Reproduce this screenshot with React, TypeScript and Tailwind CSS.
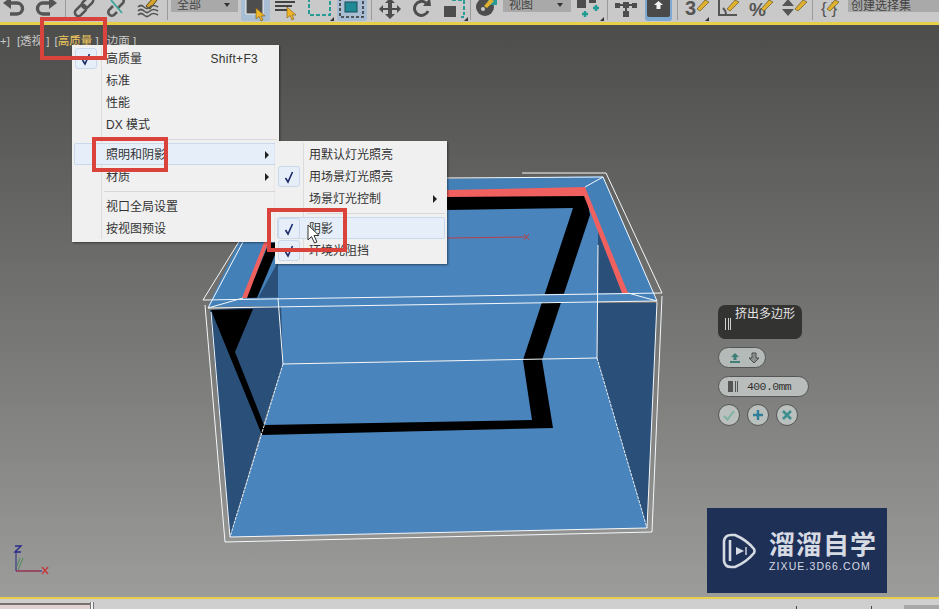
import type { ReactNode } from "react";

const cjk = { fontFamily: '"Liberation Sans", "Noto Sans CJK SC", sans-serif' };

function Sep({ className }: { className: string }) {
  return <div className={`h-[20px] w-px shrink-0 bg-[#9a9a9a] ${className}`} />;
}

function Ico({ w, className, children }: { w: number; className: string; children: ReactNode }) {
  return (
    <svg width={w} height={22} viewBox={`0 0 ${w} 22`} className={`shrink-0 ${className}`}>
      {children}
    </svg>
  );
}

function Flyout({ x }: { x: number }) {
  return <path d={`M${x - 4} 21 L${x} 17 V21 Z`} fill="#333" />;
}

function Cursor() {
  return <path d="M15 8 L15 19 L18 16.5 L20 21 L22 20 L20 16 L24 16 Z" fill="#f0b429" stroke="#7a5a10" strokeWidth="0.6" />;
}

function Pencil({ x }: { x: number }) {
  return <path d={`M${x} 9 L${x + 8} 0 L${x + 12} 2 L${x + 3} 11 Z`} fill="#e0b030" stroke="#6b5a20" strokeWidth="0.7" />;
}

function Toolbar() {
  return (
    <div className="flex h-[22px] shrink-0 items-start overflow-hidden bg-[#c9c9c9]" style={cjk}>
      <Ico w={22} className="ml-[3px]">
        <path d="M6 3 H14 a5.5 5.5 0 0 1 0 11 H7" fill="none" stroke="#555" strokeWidth="3.4" />
        <path d="M0 3 L8 -3 V9 Z" fill="#555" />
      </Ico>
      <Ico w={22} className="ml-[10px]">
        <path d="M16 3 H8 a5.5 5.5 0 0 0 0 11 H15" fill="none" stroke="#555" strokeWidth="3.4" />
        <path d="M22 3 L14 -3 V9 Z" fill="#555" />
      </Ico>
      <Sep className="ml-[8px]" />
      <Ico w={22} className="ml-[7px]">
        <g fill="none" stroke="#555" strokeWidth="2.6">
          <rect x="1" y="7" width="13" height="7" rx="3.5" transform="rotate(-45 7.5 10.5)" />
          <rect x="8" y="-1" width="13" height="7" rx="3.5" transform="rotate(-45 14.5 2.5)" />
        </g>
      </Ico>
      <Ico w={21} className="ml-[11px]">
        <g fill="none" strokeWidth="2.6">
          <path d="M7 6 L3 10 a3.6 3.6 0 0 0 5 5 L11 12" stroke="#555" />
          <path d="M12 8 L17 3 a3.6 3.6 0 0 0 -5 -5" stroke="#555" />
          <path d="M5 0 L16 13" stroke="#3aa59c" strokeWidth="1.8" />
        </g>
      </Ico>
      <Ico w={23} className="ml-[10px]">
        <path d="M9 6 L17 -3 L20 0 L13 9 Z" fill="#d9a52c" stroke="#55401a" strokeWidth="1" />
        <g fill="none" stroke="#555" strokeWidth="1.7">
          <path d="M1 7 q3 -3 6 0 t6 0 t8 0" />
          <path d="M1 11 q3 -3 6 0 t6 0 t8 0" />
          <path d="M1 15 q3 -3 6 0 t6 0 t8 0" />
        </g>
      </Ico>
      <Sep className="ml-[7px]" />
      <div className="ml-[3px] flex h-[12px] w-[67px] shrink-0 items-end justify-between bg-[#a9a9a9] pl-[6px] pr-[8px] text-[12px] leading-[14px] text-[#444]">
        <span>全部</span>
        <span className="mb-[5px] h-0 w-0 border-x-[3px] border-t-[4px] border-x-transparent border-t-[#333]" />
      </div>
      <div className="ml-[3px] h-[21px] w-[29px] shrink-0 rounded-b-[2px] bg-[#a9bdd3]">
        <Ico w={29} className="">
          <path d="M5 -2 H22 V14 H5 Z" fill="#4d4d4d" stroke="#f2f2f2" strokeWidth="1" />
          <Cursor />
        </Ico>
      </div>
      <Ico w={23} className="ml-[5px]">
        <path d="M0 2 H20 M0 6 H17 M0 10 H14" stroke="#444" strokeWidth="2" />
        <g transform="translate(-3 -1)">
          <Cursor />
        </g>
      </Ico>
      <Ico w={26} className="ml-[10px]">
        <path d="M1 -2 V15 H22 V-2" fill="none" stroke="#2a9a94" strokeWidth="2" strokeDasharray="4 2" />
        <Flyout x={26} />
      </Ico>
      <div className="ml-[3px] h-[21px] w-[30px] shrink-0 rounded-b-[2px] bg-[#a9bdd3]">
        <Ico w={30} className="">
          <path d="M3 -2 V17 H26 V-2" fill="none" stroke="#333" strokeWidth="1.6" strokeDasharray="3 2" />
          <rect x="8" y="2" width="12" height="10" fill="#1e8a96" stroke="#174f58" strokeWidth="1" />
        </Ico>
      </div>
      <Sep className="ml-[4px]" />
      <Ico w={22} className="ml-[7px]">
        <path d="M11 -2 L16 3 H13 V8 H18 V5 L22 9 L18 13 V10 H13 V14 H16 L11 19 L6 14 H9 V10 H4 V13 L0 9 L4 5 V8 H9 V3 H6 Z" fill="#4d4d4d" />
      </Ico>
      <Ico w={20} className="ml-[11px]">
        <path d="M14 3 a7 7 0 1 0 2 8" fill="none" stroke="#4d4d4d" strokeWidth="3" />
        <path d="M11 6 L19 6 L18 -2 Z" fill="#4d4d4d" />
      </Ico>
      <Ico w={25} className="ml-[11px]">
        <rect x="1" y="6" width="12" height="11" fill="#4d4d4d" />
        <path d="M9 0 H21 V12" fill="none" stroke="#2a9a94" strokeWidth="2" strokeDasharray="4 2" />
        <path d="M21 12 V17 H16" fill="none" stroke="#2a9a94" strokeWidth="2" strokeDasharray="3 2" />
        <Flyout x={25} />
      </Ico>
      <Sep className="ml-[2px]" />
      <Ico w={22} className="ml-[4px]">
        <circle cx="10" cy="7" r="9" fill="#4d4d4d" />
        <circle cx="8" cy="9" r="2" fill="#c9c9c9" />
        <path d="M13 -2 H22 V5 H13 Z" fill="#2a9a94" />
        <path d="M9 6 L15 -1 L19 1 L12 8 Z" fill="#e0b030" />
      </Ico>
      <div className="ml-[6px] flex h-[12px] w-[68px] shrink-0 items-end justify-between bg-[#a9a9a9] pl-[6px] pr-[8px] text-[12px] leading-[14px] text-[#444]">
        <span>视图</span>
        <span className="mb-[5px] h-0 w-0 border-x-[3px] border-t-[4px] border-x-transparent border-t-[#333]" />
      </div>
      <Ico w={27} className="ml-[6px]">
        <rect x="0" y="-2" width="9" height="10" fill="#4d4d4d" />
        <rect x="12" y="-2" width="7" height="5" fill="#4d4d4d" />
        <path d="M5 14 H11 M8 11 V17 M16 8 H22 M19 5 V11" stroke="#1f9c94" strokeWidth="2.4" />
        <Flyout x={27} />
      </Ico>
      <Sep className="ml-[3px]" />
      <Ico w={22} className="ml-[7px]">
        <path d="M11 3 V12 M2 5 H20" stroke="#4d4d4d" strokeWidth="2" />
        <rect x="0" y="3" width="5" height="5" fill="#4d4d4d" />
        <rect x="8" y="2" width="6" height="6" fill="#4d4d4d" />
        <rect x="17" y="3" width="5" height="5" fill="#4d4d4d" />
        <rect x="8" y="11" width="6" height="6" fill="#4d4d4d" />
      </Ico>
      <div className="ml-[8px] h-[21px] w-[27px] shrink-0 rounded-b-[3px] bg-[#7ea9d3]">
        <Ico w={27} className="">
          <rect x="2" y="-3" width="23" height="20" rx="2" fill="#4a4a4a" />
          <path d="M13.5 1 L18 5 H15.5 V9 H11.5 V5 H9 Z" fill="#f2f2f2" />
        </Ico>
      </div>
      <Sep className="ml-[5px]" />
      <Ico w={24} className="ml-[7px]">
        <text x="0" y="15" fontSize="20" fontWeight="700" fill="#555" fontFamily="Liberation Sans">3</text>
        <Pencil x={12} />
        <Flyout x={24} />
      </Ico>
      <Ico w={22} className="ml-[8px]">
        <path d="M2 0 V15 H20 M9 15 a9 9 0 0 0 -3 -7" fill="none" stroke="#555" strokeWidth="2" />
        <Pencil x={10} />
      </Ico>
      <Ico w={24} className="ml-[10px]">
        <text x="0" y="16" fontSize="19" fontWeight="700" fill="#555" fontFamily="Liberation Sans">%</text>
        <Pencil x={12} />
      </Ico>
      <Ico w={25} className="ml-[9px]">
        <path d="M0 6 L6 -1 L12 6 Z M0 9 H12 L6 16 Z" fill="#555" />
        <Pencil x={13} />
      </Ico>
      <Sep className="ml-[5px]" />
      <Ico w={18} className="ml-[8px]">
        <text x="0" y="14" fontSize="17" fill="#555" fontFamily="Liberation Sans">{"{ }"}</text>
        <Pencil x={6} />
      </Ico>
      <div className="ml-[9px] h-[12px] flex-1 bg-[#a9a9a9] pl-[3px] text-[12px] leading-[12px] text-[#444]">
        创建选择集
      </div>
    </div>
  );
}

function Scene() {
  const lines = [
    "203,300 662,293", "208,308 657,301",
    "203,300 240,240", "208,308 244,240",
    "606,173 662,293", "603,177 657,301",
    "447,178 603,177", "522,173 606,173",
    "205,305 225,542", "211,312 230,537",
    "657,302 647,528", "662,296 652,532",
    "230,537 647,528", "225,542 652,532",
    "283,364 597,358", "278,298 283,364", "598,245 597,358",
    "208,308 243,298", "657,301 628,293", "585,187 603,177",
  ];
  return (
    <svg className="absolute inset-0 h-full w-full" viewBox="0 25 939 572" preserveAspectRatio="none">
      <polygon points="208,306 657,300 603,176 268,182" fill="#4480b8" />
      <polygon points="270,205 585,195 598,222 598,305 278,306 278,260" fill="#4a84bc" />
      <polygon points="258,298 278,262 278,298" fill="#2a4f78" />
      <polygon points="598,222 622,293 598,295" fill="#2a4f78" />
      <polygon points="278,306 598,303 597,358 283,363" fill="#4a84bc" />
      <polygon points="210,310 281,305 283,363 263,425 230,537" fill="#2a4f78" />
      <polygon points="598,303 657,303 647,528 597,358" fill="#2a4f78" />
      <polygon points="283,363 597,358 647,528 230,537" fill="#4a84bc" />
      <polygon points="211,310 253,309 235,352 264,425 532,420 523,360 573,208 447,210 447,195 586,193 590,215 542,360 553,428 262,435" fill="#000" />
      <polygon points="246,298 269,243 280,243 257,298" fill="#000" />
      <polygon points="242,298 267,235 271,235 247,298" fill="#f0605f" />
      <polygon points="447,190 585,187 587,196 447,197" fill="#f0605f" />
      <polygon points="585,187 628,293 622,293 584,196" fill="#f0605f" />
      <polygon points="208,307 243,298 628,293 657,301" fill="#4a84bc" />
      {lines.map((p) => (
        <polyline key={p} points={p} fill="none" stroke="#f4f8fb" strokeWidth="1" />
      ))}
      <path d="M283 364 L230 537 M597 358 L647 528" stroke="#e8f0f6" strokeWidth="1" strokeDasharray="3 1" />
      <path d="M447 238 L525 237" stroke="#b8404a" strokeWidth="1" />
      <path d="M524 234 L529 240 M529 234 L524 240" stroke="#b8404a" strokeWidth="1" />
      <path d="M16 550 V571 H42" fill="none" stroke="#2a2a8a" strokeWidth="1" />
      <path d="M16 571 H40" stroke="#c8393c" strokeWidth="1" />
      <path d="M17 566 L20 558 M23 558 L18 570" stroke="#4c8a5a" strokeWidth="1" />
      <path d="M15 546 H21 L15 552 H21" fill="none" stroke="#2a2a8a" strokeWidth="1.4" />
      <path d="M42 567 L48 574 M48 567 L42 574" stroke="#c8393c" strokeWidth="1.4" />
    </svg>
  );
}

function Check() {
  return (
    <svg width="12" height="14" viewBox="0 0 12 14">
      <path d="M2.5 8 L5 12 L9.5 2" fill="none" stroke="#1d2a6b" strokeWidth="1.6" />
    </svg>
  );
}

type Row = { label?: string; hint?: string; check?: boolean; arrow?: boolean; hot?: boolean; sep?: boolean };

function Menu({ rows, gutter, className }: { rows: Row[]; gutter: string; className: string }) {
  return (
    <div className={`absolute bg-[#f0f0f0] px-[2px] pb-[3px] pt-[2px] text-[12px] text-[#333] shadow-[1px_1px_2px_rgba(0,0,0,0.45)] ${className}`} style={cjk}>
      <div className={`absolute bottom-[3px] top-[2px] w-px bg-[#dcdcdc] ${gutter}`} />
      {rows.map((r, i) =>
        r.sep ? (
          <div key={i} className="flex h-[8px] items-center pl-[30px]">
            <div className="h-px w-full bg-[#d8d8d8]" />
          </div>
        ) : (
          <div
            key={i}
            className={`relative flex h-[22px] items-center rounded-[2px] border pl-[31px] pr-[7px] pt-[2px] ${
              r.hot ? "border-[#c9d8ea] bg-[#e6eff9]" : "border-transparent"
            }`}
          >
            {r.check && (
              <span className="absolute left-0 top-0 flex h-[21px] w-[22px] items-center justify-center rounded-[3px] border border-[#c9d8ea] bg-[#e6eff9]">
                <Check />
              </span>
            )}
            <span>{r.label}</span>
            {r.hint && <span className="ml-auto mr-[11px] tracking-[0.3px]">{r.hint}</span>}
            {r.arrow && (
              <span className="ml-auto h-0 w-0 border-y-[4px] border-l-[4px] border-y-transparent border-l-[#222]" />
            )}
          </div>
        ),
      )}
    </div>
  );
}

function Caddy() {
  const circle = "flex h-[22px] w-[22px] items-center justify-center rounded-full border border-[#555] bg-[#b9c0bd]";
  return (
    <div className="absolute left-[718px] top-[280px] flex w-[91px] flex-col items-start" style={cjk}>
      <div className="relative h-[34px] w-[84px] rounded-[7px] bg-[#333331] pl-[17px] pt-px text-[12px] leading-[16px] text-[#e4e4e4]">
        挤出多边形
        <span className="absolute left-[7px] top-[13px] h-[12px] w-[6px] border-x border-[#cfcfcf] after:absolute after:left-[1.5px] after:h-[12px] after:w-px after:bg-[#cfcfcf]" />
      </div>
      <div className="mt-[8px] flex h-[21px] w-[48px] items-center gap-[7px] rounded-full border border-[#555] bg-[#b4bab8] pl-[10px]">
        <svg width="12" height="12" viewBox="0 0 12 12">
          <path d="M6 1 L10 5 H7.5 V8 H4.5 V5 H2 Z M1 9 H11 V11 H1 Z" fill="#3f7f78" />
        </svg>
        <svg width="12" height="12" viewBox="0 0 12 12">
          <path d="M6 11 L11 6 H8 V1 H4 V6 H1 Z" fill="#8a8f8d" stroke="#4a4f4d" strokeWidth="1" />
        </svg>
      </div>
      <div className="mt-[8px] flex h-[21px] w-[91px] items-center rounded-full border border-[#555] bg-[#b9bebc] pl-[9px] text-[11.5px] text-[#333]">
        <span className="h-[11px] w-[5px] bg-[#555]" />
        <span className="ml-[2px] h-[11px] w-[3px] border-x border-[#555]" />
        <span className="ml-[9px] font-['Liberation_Mono'] tracking-[-0.6px]">400.0mm</span>
      </div>
      <div className="mt-[7px] flex gap-[7px]">
        <div className={circle}>
          <svg width="12" height="12" viewBox="0 0 12 12">
            <path d="M1 7 L4.5 10.5 L11 2" fill="none" stroke="#7fb0a4" strokeWidth="2" />
          </svg>
        </div>
        <div className={circle}>
          <svg width="12" height="12" viewBox="0 0 12 12">
            <path d="M6 1 V11 M1 6 H11" stroke="#2f7f98" strokeWidth="2.4" />
          </svg>
        </div>
        <div className={circle}>
          <svg width="12" height="12" viewBox="0 0 12 12">
            <path d="M2 2 L10 10 M10 2 L2 10" stroke="#3f8f90" strokeWidth="2.6" />
          </svg>
        </div>
      </div>
    </div>
  );
}

function Logo() {
  return (
    <div className="absolute left-[707px] top-[483px] flex h-[85px] w-[180px] items-center bg-[#1f3057] pl-[15px] text-[#d6dae2]">
      <svg width="34" height="38" viewBox="0 0 34 38" className="shrink-0">
        <path d="M9 3 H13 C20 6 28 12 32 17 Q33 19 32 21 C28 26 20 32 13 35 H9 Q3 35 2 29 V9 Q3 3 9 3 Z" fill="none" stroke="#d6dae2" strokeWidth="2.6" />
        <path d="M8 8 V29" stroke="#d6dae2" strokeWidth="2.6" />
        <path d="M14 15 L22 19 L14 23 Z" fill="#d6dae2" />
        <path d="M24 15 V23" stroke="#d6dae2" strokeWidth="1.4" />
      </svg>
      <div className="ml-[13px] flex flex-col">
        <span className="text-[26px] font-bold leading-[28px] tracking-[1px]" style={{ fontFamily: '"Noto Sans CJK SC", sans-serif' }}>
          溜溜自学
        </span>
        <span className="mt-[3px] font-['Liberation_Sans'] text-[10.5px] leading-[12px] tracking-[1.1px]">ZIXUE.3D66.COM</span>
      </div>
    </div>
  );
}

const mainRows: Row[] = [
  { label: "高质量", hint: "Shift+F3", check: true },
  { label: "标准" },
  { label: "性能" },
  { label: "DX 模式" },
  { sep: true },
  { label: "照明和阴影", arrow: true, hot: true },
  { label: "材质", arrow: true },
  { sep: true },
  { label: "视口全局设置" },
  { label: "按视图预设" },
];

const subRows: Row[] = [
  { label: "用默认灯光照亮" },
  { label: "用场景灯光照亮", check: true },
  { label: "场景灯光控制", arrow: true },
  { sep: true },
  { label: "阴影", check: true, hot: true },
  { label: "环境光阻挡", check: true },
];

export default function App() {
  return (
    <div className="flex h-[609px] w-[939px] flex-col overflow-hidden">
      <Toolbar />
      <div className="h-[3px] shrink-0 bg-[#e8cf4a]" />
      <div className="relative flex-1 bg-gradient-to-b from-[#4d4d4b] to-[#9c9c9a]">
        <Scene />
        <div className="absolute left-0 top-[9px] flex pt-px text-[11.5px] leading-[13px] text-[#c8c8c8]" style={cjk}>
          <span>+]</span>
          <span className="ml-[7px]">[透视 ]</span>
          <span className="ml-[5px]">
            [<span className="text-[#efc75e]">高质量</span> ]
          </span>
          <span className="ml-[5px]">[边面 ]</span>
        </div>
        <Menu rows={mainRows} gutter="left-[29px]" className="left-[72px] top-[20px] w-[207px]" />
        <Menu rows={subRows} gutter="left-[28px]" className="left-[275px] top-[116px] w-[172px]" />
        <div className="absolute left-[40px] top-[-8px] h-[43px] w-[67px] border-[4px] border-[#d9433c]" />
        <div className="absolute left-[92px] top-[112px] h-[35px] w-[76px] border-[4px] border-[#d9433c]" />
        <div className="absolute left-[267px] top-[183px] h-[44px] w-[80px] border-[4px] border-[#d9433c]" />
        <svg width="14" height="20" viewBox="0 0 14 20" className="absolute left-[307px] top-[199px]">
          <path d="M1 1 V16 L4.5 12.5 L7.5 19 L10 18 L7 11.5 L12 11.5 Z" fill="#fff" stroke="#333" strokeWidth="1" />
        </svg>
        <Caddy />
        <Logo />
      </div>
      <div className="h-[2px] shrink-0 bg-[#e8cf4a]" />
      <div className="relative flex h-[10px] shrink-0 items-start bg-[#cfcfcf] pt-[4px]">
        <div className="h-[2px] w-[90px] bg-[#77726e]" />
        <div className="absolute left-0 top-[6px] h-[4px] w-[90px] bg-[#e3d2d2]" />
        <div className="absolute left-[90px] top-[3px] h-[7px] w-[4px] border-x border-[#777] bg-[#f2f2f2]" />
        <div className="absolute left-[796px] top-[7px] h-[3px] w-px bg-[#444]" />
        <div className="absolute left-[871px] top-[7px] h-[3px] w-px bg-[#444]" />
        <div className="absolute right-0 top-[6px] h-[4px] w-[35px] bg-[#a8a8a8]" />
      </div>
    </div>
  );
}
